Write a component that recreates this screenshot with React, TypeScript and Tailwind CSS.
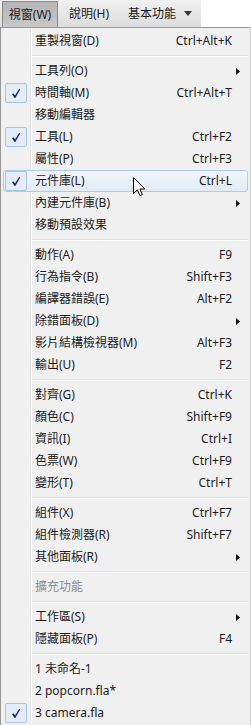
import React from "react";

type Item =
  | {
      label: string;
      shortcut?: string;
      sub?: boolean;
      checked?: boolean;
      disabled?: boolean;
      active?: boolean;
    }
  | "sep";

const items: Item[] = [
  { label: "重製視窗(D)", shortcut: "Ctrl+Alt+K" },
  "sep",
  { label: "工具列(O)", sub: true },
  { label: "時間軸(M)", shortcut: "Ctrl+Alt+T", checked: true },
  { label: "移動編輯器" },
  { label: "工具(L)", shortcut: "Ctrl+F2", checked: true },
  { label: "屬性(P)", shortcut: "Ctrl+F3" },
  { label: "元件庫(L)", shortcut: "Ctrl+L", checked: true, active: true },
  { label: "內建元件庫(B)", sub: true },
  { label: "移動預設效果" },
  "sep",
  { label: "動作(A)", shortcut: "F9" },
  { label: "行為指令(B)", shortcut: "Shift+F3" },
  { label: "編譯器錯誤(E)", shortcut: "Alt+F2" },
  { label: "除錯面板(D)", sub: true },
  { label: "影片結構檢視器(M)", shortcut: "Alt+F3" },
  { label: "輸出(U)", shortcut: "F2" },
  "sep",
  { label: "對齊(G)", shortcut: "Ctrl+K" },
  { label: "顏色(C)", shortcut: "Shift+F9" },
  { label: "資訊(I)", shortcut: "Ctrl+I" },
  { label: "色票(W)", shortcut: "Ctrl+F9" },
  { label: "變形(T)", shortcut: "Ctrl+T" },
  "sep",
  { label: "組件(X)", shortcut: "Ctrl+F7" },
  { label: "組件檢測器(R)", shortcut: "Shift+F7" },
  { label: "其他面板(R)", sub: true },
  "sep",
  { label: "擴充功能", disabled: true },
  "sep",
  { label: "工作區(S)", sub: true },
  { label: "隱藏面板(P)", shortcut: "F4" },
  "sep",
  { label: "1 未命名-1" },
  { label: "2 popcorn.fla*" },
  { label: "3 camera.fla", checked: true },
];

function Check() {
  return (
    <div className="flex h-[20px] w-[22px] items-center justify-center rounded-[2px] border border-[#a7c3e6] bg-[#e4ecf7]">
      <svg width="10" height="11" viewBox="0 0 10 11">
        <path d="M1 6.2 L2.4 5.2 L4 7.6 L8.2 0.8 L9.2 1.6 L4.3 10 L3.6 10 Z" fill="#14246e" />
      </svg>
    </div>
  );
}

function Cursor() {
  return (
    <svg width="13" height="20" viewBox="0 0 13 20" className="absolute left-[129px] top-[6px]">
      <path
        d="M0.5 0.5 L0.5 16.5 L4.4 12.8 L6.9 18.6 L9.3 17.6 L6.9 12 L11.8 12 Z"
        fill="#ffffff"
        stroke="#000000"
        strokeWidth="1"
        strokeLinejoin="miter"
      />
    </svg>
  );
}

export default function App() {
  return (
    <div
      className="h-[725px] w-[251px] overflow-hidden bg-white text-[12px] text-[#1b1b1b]"
      style={{ fontFamily: '"Noto Sans", "Noto Sans CJK TC", sans-serif' }}
    >
      <div className="flex h-[27px] w-[201px] items-stretch bg-[linear-gradient(#f0f0f0,#dcdcdc)]">
        <div className="ml-[2px] mt-[1px] flex w-[56px] items-center justify-center border border-b-0 border-[#8a8a8a] bg-[linear-gradient(#b4b4b4,#c8c8c8)]">
          視窗(W)
        </div>
        <div className="flex w-[62px] items-center justify-center">說明(H)</div>
        <div className="flex items-center gap-[8px] pl-[8px]">
          <span>基本功能</span>
          <svg width="8" height="5" viewBox="0 0 8 5">
            <path d="M0 0 L8 0 L4 5 Z" fill="#333" />
          </svg>
        </div>
      </div>

      <div className="h-[698px] w-[251px] border-l border-t border-r border-[#979797] border-r-[#cfcfcf] bg-[linear-gradient(to_right,#f0f0f0_29px,#e2e3e3_29px,#e2e3e3_30px,#ffffff_30px,#ffffff_31px,#f0f0f0_31px)] px-[2px] pt-[2px]">
        {items.map((item, i) => {
          if (item === "sep") {
            return (
              <div key={i} className="flex h-[8px] items-center pl-[29px]">
                <div className="h-[2px] w-full border-b border-t border-b-white border-t-[#e0e0e0]" />
              </div>
            );
          }
          return (
            <div
              key={i}
              className={
                "relative flex h-[22px] items-center rounded-[3px] border " +
                (item.active
                  ? "border-[#aecbee] bg-[linear-gradient(#f1f5fb,#e3ebf6)]"
                  : "border-transparent")
              }
            >
              <div className="flex w-[23px] justify-center">{item.checked && <Check />}</div>
              <span className={"ml-[8px] " + (item.disabled ? "text-[#8d8d8d]" : "")}>{item.label}</span>
              <span className="ml-auto pr-[15px]">{item.shortcut}</span>
              {item.sub && (
                <svg width="4" height="7" viewBox="0 0 4 7" className="mr-[7px]">
                  <path d="M0 0 L4 3.5 L0 7 Z" fill="#111" />
                </svg>
              )}
              {item.active && <Cursor />}
            </div>
          );
        })}
      </div>
    </div>
  );
}
